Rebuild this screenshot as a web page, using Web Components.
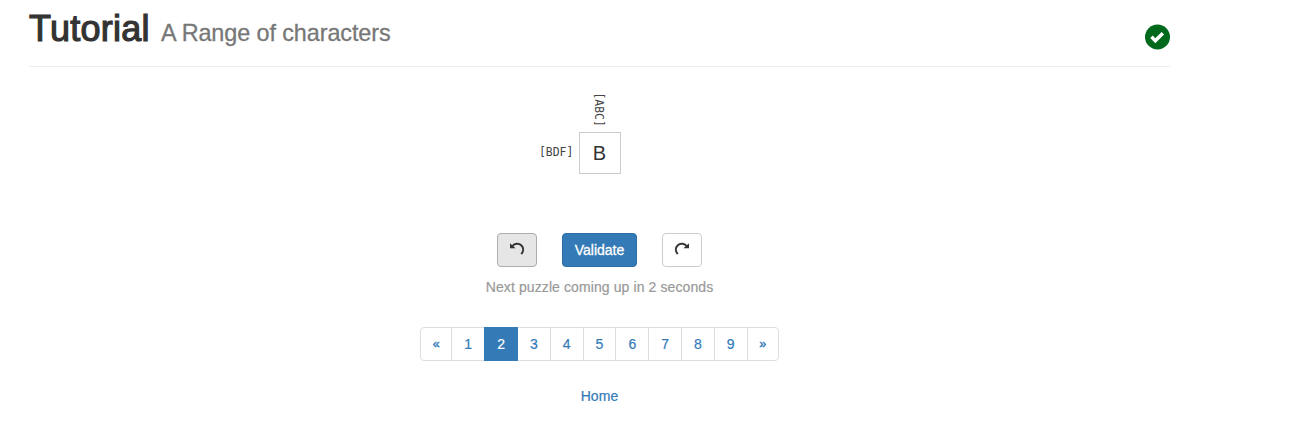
<!DOCTYPE html>
<html lang="en">
<head>
<meta charset="utf-8">
<title>Tutorial</title>
<style>
body{margin:0;background:#fff;color:#333;font:14px/20px "Liberation Sans",Arial,sans-serif}
</style>
</head>
<body>
<tutorial-page>
  <page-header slot="header" heading="Tutorial">A Range of characters</page-header>
  <puzzle-board row="[BDF]" column="[ABC]">B</puzzle-board>
  <puzzle-controls>Next puzzle coming up in 2 seconds</puzzle-controls>
  <page-nav current="2" count="9"></page-nav>
  <home-link>Home</home-link>
</tutorial-page>
<script>
function define(name, render) {
  customElements.define(name, class extends HTMLElement {
    constructor() {
      super();
      this.attachShadow({ mode: 'open' });
    }
    connectedCallback() {
      this.shadowRoot.innerHTML = render(this);
    }
  });
}

define('tutorial-page', () => `
  <style>
    :host{display:block;width:1141px;margin-left:29px}
    main{display:flex;flex-direction:column;align-items:center}
  </style>
  <slot name="header"></slot>
  <main><slot></slot></main>`);

define('status-badge', () => `
  <style>:host{display:block;width:25px;height:26px} svg{display:block}</style>
  <svg width="25" height="26" viewBox="0 0 25 26">
    <circle cx="12.5" cy="13" r="12.5" fill="#00691c"/>
    <path d="M5.2 14.1 7.7 11.6 10.3 14.2 16.6 7.9 19.1 10.4 10.3 19.2Z" fill="#fff"/>
  </svg>`);

define('page-header', el => `
  <style>
    :host{display:flex;justify-content:space-between;height:66px;border-bottom:1px solid #eee}
    h1{margin:9px 0 0;font-size:36px;line-height:40px;font-weight:400;white-space:nowrap;display:flex;align-items:baseline}
    .name{width:132px;letter-spacing:.25px;-webkit-text-stroke:1.2px #333}
    small{font-size:23.4px;line-height:1;color:#777;letter-spacing:-.09px;-webkit-text-stroke:.3px #777}
    status-badge{margin-top:24px}
  </style>
  <h1><span class="name">${el.getAttribute('heading')}</span><small><slot></slot></small></h1>
  <status-badge></status-badge>`);

define('puzzle-board', el => `
  <style>
    :host{display:grid;grid-template-columns:39px 42px 39px;grid-template-rows:39px 42px;margin-top:26px}
    .hint{font:12px/14px "DejaVu Sans Mono",monospace;color:#444}
    .column{grid-column:2;justify-self:center;writing-mode:vertical-rl;transform:translate(-1px,-.5px) scaleY(.95);transform-origin:top}
    .row{grid-column:1;grid-row:2;align-self:center;justify-self:start;transform:translate(-1px,-1px) scaleX(.95);transform-origin:left}
    .cell{grid-column:2;grid-row:2;box-sizing:border-box;border:1px solid #ccc;display:grid;place-items:center;font-size:20px;line-height:40px}
  </style>
  <span class="hint column">${el.getAttribute('column')}</span>
  <span class="hint row">${el.getAttribute('row')}</span>
  <div class="cell"><slot></slot></div>`);

define('icon-button', el => `
  <style>
    :host{display:block}
    button{box-sizing:border-box;width:40px;height:34px;border:1px solid #ccc;border-radius:4px;background:#fff;padding:0;display:grid;place-items:center}
    :host([active]) button{background:#e6e6e6;border-color:#adadad}
    :host([flip]) svg{transform:scaleX(-1)}
    svg{display:block;position:relative;top:-1px}
  </style>
  <button aria-label="${el.getAttribute('label')}">
    <svg width="16" height="14" viewBox="0 0 16 14">
      <path d="M3.4 4.2C5.6 1.4 9.7 1 12.2 3.2 14.8 5.6 14.7 9.3 12.3 12.2" fill="none" stroke="#333" stroke-width="2"/>
      <path d="M1 1.2 6.6 6.2H1Z" fill="#333"/>
    </svg>
  </button>`);

define('puzzle-controls', () => `
  <style>
    :host{display:flex;flex-direction:column;align-items:center;margin-top:59px}
    .buttons{display:flex;gap:25px}
    .validate{box-sizing:border-box;width:75px;height:34px;padding:0;border:1px solid #2e6da4;border-radius:4px;background:#337ab7;color:#fff;font:14px/20px "Liberation Sans",Arial,sans-serif;-webkit-text-stroke:.3px #fff}
    p{margin:10px 0 0;color:#999;white-space:nowrap;letter-spacing:.1px;-webkit-text-stroke:.2px #999}
  </style>
  <div class="buttons">
    <icon-button active label="Undo"></icon-button>
    <button class="validate">Validate</button>
    <icon-button flip label="Redo"></icon-button>
  </div>
  <p><slot></slot></p>`);

define('page-nav', el => {
  const current = Number(el.getAttribute('current'));
  const pages = Array.from({ length: Number(el.getAttribute('count')) }, (_, i) => i + 1);
  return `
  <style>
    :host{display:block;margin-top:30px}
    nav{display:flex}
    a{box-sizing:border-box;width:33.82px;height:34px;margin-left:-1px;border:1px solid #ddd;color:#337ab7;text-align:center;line-height:32px;text-decoration:none;-webkit-text-stroke:.2px}
    .edge{width:32px;font-size:12.5px;-webkit-text-stroke:.4px}
    a:first-child{margin-left:0;border-radius:4px 0 0 4px}
    a:last-child{border-radius:0 4px 4px 0}
    .current{background:#337ab7;border-color:#337ab7;color:#fff;z-index:1}
  </style>
  <nav>
    <a class="edge" href="#prev">«</a>
    ${pages.map(n => `<a href="#${n}"${n === current ? ' class="current"' : ''}>${n}</a>`).join('')}
    <a class="edge" href="#next">»</a>
  </nav>`;
});

define('home-link', () => `
  <style>:host{display:block;margin-top:25px} a{color:#337ab7;text-decoration:none;letter-spacing:.1px;-webkit-text-stroke:.2px}</style>
  <a href="#home"><slot></slot></a>`);
</script>
</body>
</html>
